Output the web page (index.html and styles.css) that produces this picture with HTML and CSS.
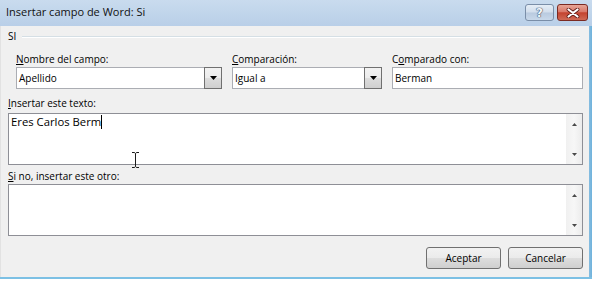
FILE: index.html
```html
<!DOCTYPE html>
<html lang="es">
<head>
<meta charset="utf-8">
<title>Insertar campo de Word: Si</title>
<link rel="stylesheet" href="styles.css">
</head>
<body>
<div class="window">
  <div class="titlebar">
    <span class="title">Insertar campo de Word: Si</span>
    <div class="caption-btns">
      <span class="cbtn help"><span class="q">?</span></span>
      <span class="cbtn close">
        <svg width="14" height="10" viewBox="0 0 14 10">
          <path d="M2.5 1.5 L11.5 8.5 M11.5 1.5 L2.5 8.5" stroke="#5e1a14" stroke-width="3.8" stroke-linecap="round"/>
          <path d="M2.5 1.5 L11.5 8.5 M11.5 1.5 L2.5 8.5" stroke="#ffffff" stroke-width="2.2" stroke-linecap="round"/>
        </svg>
      </span>
    </div>
  </div>
  <div class="frame">
    <div class="client">
      <div class="group-head"><span class="group-name">SI</span><span class="rule"></span></div>
      <div class="fields">
        <span class="flabel"><u>N</u>ombre del campo:</span>
        <span class="flabel"><u>C</u>omparación:</span>
        <span class="flabel">C<u>o</u>mparado con:</span>
        <div class="combo">
          <span class="val">Apellido</span>
          <span class="drop"><svg width="7" height="4" viewBox="0 0 7 4"><path d="M0 0 H7 L3.5 4 Z" fill="#000"/></svg></span>
        </div>
        <div class="combo">
          <span class="val">Igual a</span>
          <span class="drop"><svg width="7" height="4" viewBox="0 0 7 4"><path d="M0 0 H7 L3.5 4 Z" fill="#000"/></svg></span>
        </div>
        <div class="combo">
          <span class="val">Berman</span>
        </div>
      </div>
      <div class="lbl"><u>I</u>nsertar este texto:</div>
      <div class="memo">
        <div class="memo-text">Eres Carlos Berm<span class="caret"></span></div>
        <div class="scroll">
          <svg width="5" height="3" viewBox="0 0 5 3"><path d="M0 3 H5 L2.5 0 Z" fill="#4a4a4a"/></svg>
          <svg width="5" height="3" viewBox="0 0 5 3"><path d="M0 0 H5 L2.5 3 Z" fill="#4a4a4a"/></svg>
        </div>
      </div>
      <div class="lbl lbl2"><u>S</u>i no, insertar este otro:</div>
      <div class="memo">
        <div class="memo-text"></div>
        <div class="scroll">
          <svg width="5" height="3" viewBox="0 0 5 3"><path d="M0 3 H5 L2.5 0 Z" fill="#4a4a4a"/></svg>
          <svg width="5" height="3" viewBox="0 0 5 3"><path d="M0 0 H5 L2.5 3 Z" fill="#4a4a4a"/></svg>
        </div>
      </div>
      <div class="actions">
        <button class="btn">Aceptar</button>
        <button class="btn">Cancelar</button>
      </div>
    </div>
    <div class="edge"></div>
  </div>
  <div class="bottom-edge"></div>
  <div class="below"></div>
  <svg class="ibeam" width="9" height="18" viewBox="0 0 9 18">
    <path d="M1 1.5 H3 Q4 1.5 4.5 2.5 Q5 1.5 6 1.5 H8 M4.5 2.5 V15.5 M1 16.5 H3 Q4 16.5 4.5 15.5 Q5 16.5 6 16.5 H8" stroke="#1a1a1a" stroke-width="1" fill="none"/>
  </svg>
</div>
</body>
</html>
```
FILE: styles.css
```css
html, body {
  margin: 0;
  padding: 0;
  background: #ffffff;
}
body {
  font-family: "Open Sans", "Noto Sans", sans-serif;
  font-size: 10px;
  line-height: 13px;
  color: #000000;
}
.window {
  position: relative;
  width: 592px;
  height: 281px;
  display: flex;
  flex-direction: column;
  overflow: hidden;
}
.titlebar {
  height: 26px;
  flex: none;
  display: flex;
  align-items: flex-start;
  background: linear-gradient(180deg, #c9dbee 0%, #bfd4ea 60%, #b9cfe8 100%);
}
.title {
  padding: 4px 0 0 6px;
  font-size: 11px;
  line-height: 15px;
  color: #111111;
}
.caption-btns {
  margin-left: auto;
  margin-right: 4px;
  padding-top: 4px;
  display: flex;
  gap: 3px;
}
.cbtn {
  height: 17px;
  border-radius: 3px;
  display: flex;
  align-items: center;
  justify-content: center;
  box-sizing: border-box;
}
.help {
  width: 29px;
  border: 1px solid #7a8ea8;
  background: linear-gradient(180deg, #e5edf6 0%, #d2deec 48%, #b9cadf 52%, #c8d8ea 100%);
}
.help .q {
  font-family: "DejaVu Sans", sans-serif;
  font-size: 12px;
  font-weight: bold;
  line-height: 14px;
  color: #f4f7fb;
  text-shadow: 0 0 1px #3c4f6a, 0 0 1px #3c4f6a, 0 0 1px #3c4f6a;
}
.close {
  width: 31px;
  border: 1px solid #7b2a22;
  background: linear-gradient(180deg, #e7a596 0%, #d9796a 45%, #c4432f 52%, #cf6a55 100%);
}
.frame {
  flex: 1;
  display: flex;
  min-height: 0;
}
.client {
  flex: 1;
  background: #f0f0f0;
  border-left: 1px solid #e2e2e2;
  padding: 4px 6px 0 7px;
  display: flex;
  flex-direction: column;
}
.edge {
  width: 3px;
  background: linear-gradient(90deg, #86bde0, #6fb2dc);
}
.bottom-edge {
  height: 2px;
  flex: none;
  background: #7cc0e4;
}
.below {
  height: 2px;
  flex: none;
  background: #ffffff;
}
.group-head {
  height: 13px;
  display: flex;
  align-items: center;
}
.group-name {
  line-height: 13px;
}
.rule {
  flex: 1;
  height: 0;
  margin: 0 3px 0 6px;
  border-top: 1px solid #d5dfe5;
  border-bottom: 1px solid #ffffff;
}
.fields {
  margin: 10px 0 0 8px;
  display: grid;
  grid-template-columns: 206px 150px 191px;
  column-gap: 10px;
  row-gap: 1px;
}
.flabel {
  height: 13px;
}
.combo {
  height: 22px;
  box-sizing: border-box;
  border: 1px solid #abadb3;
  background: #ffffff;
  display: flex;
  align-items: stretch;
}
.val {
  flex: 1;
  padding-left: 2px;
  line-height: 20px;
  color: #000;
}
.drop {
  width: 18px;
  margin: -1px -1px -1px 0;
  box-sizing: border-box;
  border: 1px solid #707070;
  background: linear-gradient(180deg, #f2f2f2 0%, #ebebeb 50%, #dddddd 51%, #cfcfcf 100%);
  display: flex;
  align-items: center;
  justify-content: center;
}
.lbl {
  margin-top: 8px;
  height: 13px;
  margin-bottom: 3px;
}
.lbl2 {
  margin-top: 5px;
  margin-bottom: 1px;
}
.memo {
  height: 52px;
  box-sizing: border-box;
  border: 1px solid #8e8f96;
  background: #ffffff;
  display: flex;
}
.memo-text {
  flex: 1;
  padding: 0 0 0 2px;
  font-size: 11.3px;
  line-height: 16px;
  color: #000;
}
.caret {
  display: inline-block;
  width: 1px;
  height: 14px;
  vertical-align: -3px;
  background: #000;
}
.scroll {
  width: 16px;
  background: linear-gradient(90deg, #f0f0f0, #f7f7f7 50%, #ececec);
  display: flex;
  flex-direction: column;
  align-items: center;
  justify-content: space-between;
  padding: 9px 0 8px;
  box-sizing: border-box;
}
.actions {
  margin-top: 11px;
  display: flex;
  justify-content: flex-end;
  gap: 7px;
}
.btn {
  width: 75px;
  height: 22px;
  padding: 0;
  box-sizing: border-box;
  border: 1px solid #707070;
  border-radius: 3px;
  background: linear-gradient(180deg, #f2f2f2 0%, #ebebeb 48%, #dddddd 52%, #cfcfcf 100%);
  font-family: "Open Sans", "Noto Sans", sans-serif;
  font-size: 10px;
  line-height: 18px;
  color: #000;
}
.ibeam {
  position: absolute;
  left: 131px;
  top: 151px;
}
```
